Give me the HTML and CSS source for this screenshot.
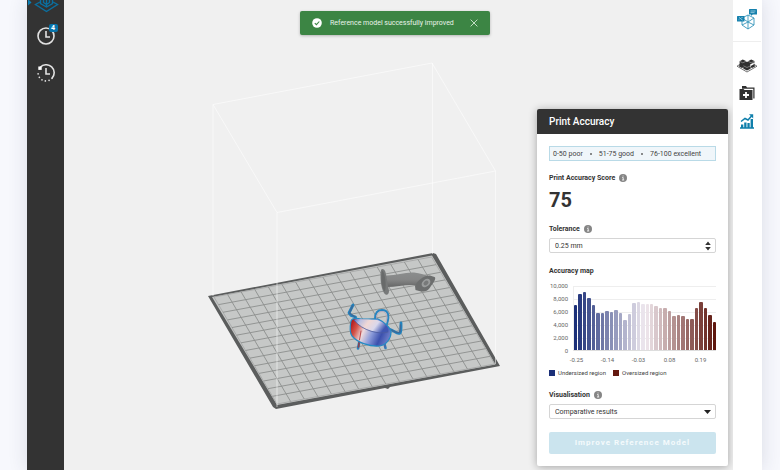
FILE: index.html
```html
<!DOCTYPE html>
<html lang="en">
<head>
<meta charset="utf-8">
<title>Print Accuracy</title>
<link rel="stylesheet" href="styles.css">
</head>
<body>
<div class="app">
  <nav class="sidebar" aria-label="Main">
    <button class="side-button side-button-current" aria-label="Prepare">
      <svg width="36" height="14" viewBox="0 0 36 14" fill="none" stroke="#0b6f9f" stroke-width="1.4">
        <path d="M0 -1 3.500 2.500 0 5.500Z" fill="#0b7fb5" stroke="none"/>
        <path d="M12 2 7.500 4.500 18.500 11.500 29.500 4.500 25 2"/>
        <path d="M12.500 0v3.500l6 3.500 6-3.500V0M18.500 0v7M15.500 -1v3.500l3 2 3-2V-1"/>
      </svg>
    </button>
    <button class="side-button" aria-label="Queue, 4 jobs">
      <svg width="18" height="18" viewBox="0 0 18 18" fill="none" stroke="#e2e2e2" stroke-width="1.600">
        <circle cx="9" cy="9" r="8"/><path d="M9 4v6h4"/>
      </svg>
      <span class="count">4</span>
    </button>
    <button class="side-button" aria-label="History">
      <svg width="18" height="18" viewBox="0 0 18 18" fill="none" stroke="#e2e2e2" stroke-width="1.600">
        <path d="M3.300 3.300A8 8 0 0 1 15 14.300"/>
        <path d="M15 14.300A8 8 0 0 1 1.200 7.500" stroke-width="1.700" stroke-linecap="round" stroke-dasharray="0 3.600"/>
        <path d="M9 4v6h4"/><path d="M1.300 2.500h3.400v3.400H1.300Z" fill="#fff" stroke="none"/>
      </svg>
    </button>
  </nav>

  <main class="viewport">
    <svg class="scene" viewBox="64 0 669 470" preserveAspectRatio="xMinYMin slice" role="img" aria-label="Build plate with two models">
      <defs>
        <linearGradient id="bowl" x1="0" y1=".3" x2="1" y2=".6">
          <stop offset="0" stop-color="#b51f22"/><stop offset=".15" stop-color="#d4554a"/><stop offset=".34" stop-color="#eddadd"/>
          <stop offset=".55" stop-color="#8c9cda"/><stop offset=".78" stop-color="#3b50ad"/><stop offset="1" stop-color="#7181cb"/>
        </linearGradient>
        <linearGradient id="bowl-inside" x1="0" y1="0" x2="1" y2=".3">
          <stop offset="0" stop-color="#5366b8"/><stop offset=".2" stop-color="#b9bfe2"/><stop offset=".45" stop-color="#f0d8d5"/>
          <stop offset=".72" stop-color="#d9d8ec"/><stop offset="1" stop-color="#4057b3"/>
        </linearGradient>
        <linearGradient id="pipe" x1="0" y1="0" x2="0" y2="1">
          <stop offset="0" stop-color="#8b8d8d"/><stop offset=".5" stop-color="#858686"/><stop offset="1" stop-color="#666767"/>
        </linearGradient>
      </defs>
      <path d="M208 296 433 253 436 254 500 366 390 387 388 389 385 388 276 409 273 407Z" fill="#5b5d5d"/>
      <path d="M212 297 432 255.500 495.500 364.500 277 405Z" fill="#c6c8c7"/>
      <path d="M214 297 431.600 257 494.600 364 277 404Z" fill="none" stroke="#a3a5a4" stroke-width=".8"/>
      <g transform="matrix(13.6 -2.5 4.5 7.64 214 297)" fill="none" stroke="#8c8e8d">
        <path vector-effect="non-scaling-stroke" stroke-width=".9" d="M1 0v14M2 0v14M3 0v14M4 0v14M5 0v14M6 0v14M7 0v14M8 0v14M9 0v14M10 0v14M11 0v14M12 0v14M13 0v14M14 0v14M15 0v14M0 1h16M0 2h16M0 3h16M0 4h16M0 5h16M0 6h16M0 7h16M0 8h16M0 9h16M0 10h16M0 11h16M0 12h16M0 13h16"/>
      </g>
      <g fill="none" stroke="#fff" stroke-width="1" opacity=".55">
        <path d="M213 104.500 432 63 495.500 171 277 212.500ZM213 104.500V296M432.500 63V254M495.500 171V364M277 212.500V407"/>
      </g>
      <g>
        <path d="M385 275.500C395 276 405 272 414 272.500 420 273 426 275 430 277L420 286C410 283 398 287 387 287Z" fill="url(#pipe)"/>
        <path d="M381 270C382 268 384.500 269 385.500 272L389 291C389 295 386 296 384 293 380.500 287 380 276 381 270Z" fill="#777979"/>
        <path d="M382 271C383 270 385 275 385.500 282S385 292 384 291C381 285 381 276 382 271Z" fill="#686a6a"/>
        <path d="M415 286C417 281 424 275 430 275.500L434.500 277C436.500 278 434 282 431 286 428 291 425 292 421 291.500L415.500 290Z" fill="#6c6e6e"/>
        <ellipse cx="426" cy="283" rx="5" ry="3.500" transform="rotate(-42 426 283)" fill="#9a9c9c"/>
        <ellipse cx="426" cy="283" rx="2.800" ry="2" transform="rotate(-42 426 283)" fill="#777979"/>
      </g>
      <g stroke-linecap="round" stroke-linejoin="round" fill="none">
        <path d="M359.500 341 358 348.500M384 342 385.500 348" stroke="#2e83bd" stroke-width="2.600"/>
        <path d="M359.500 340 358.500 347" stroke="#8c4350" stroke-width="1.700"/>
        <path d="M384 342 385 347" stroke="#5265a5" stroke-width="1.500"/>
        <path d="M375 319C375 313 378 310 382 310 388 310 390 315 387 324" stroke="#2684c0" stroke-width="1.900"/>
        <path d="M376.500 319C376.500 314 379 311.500 382 311.500 386 311.500 388 316 386 322" stroke="#b4a3ba" stroke-width=".8"/>
        <path d="M353 305 349 313 351 315.500 355.500 317 355.500 321M389 329C394 330 397 335 400 333 401.500 331 401 327 401 323" stroke="#2282bd" stroke-width="2.800"/>
        <path d="M352.500 306 349.500 313 355 317M390 330C395 331 397 334 400 332L400.500 325" stroke="#3c6998" stroke-width="1.500"/>
        <path d="M351 321C352 318 356 318 361 319L378 319C385 322 391 329 391 332 391 339 386 345 380 346 369 347 357 342 352 336 350 333 350 326 351 321Z" fill="url(#bowl)" stroke="#238ac5" stroke-width="1.200"/>
        <path d="M354 320C357 317.500 366 320 377 320 385 322 390 329 388 332 381 334 362 331 354 320Z" fill="url(#bowl-inside)"/>
        <path d="M354 320C362 331 380 335 388 332" stroke="#4d5d9e" stroke-width=".8"/>
        <path d="M361 331 359.500 340" stroke="#ba4b4c" stroke-width="1"/>
      </g>
    </svg>

    <div class="toast" role="status">
      <svg width="10" height="10" viewBox="0 0 10 10"><circle cx="5" cy="5" r="4.800" fill="#fff"/><path d="m2.800 5.200 1.600 1.500 2.900-3.200" fill="none" stroke="#3c8544" stroke-width="1.100"/></svg>
      <span class="toast-text">Reference model successfully improved</span>
      <button class="toast-close" aria-label="Dismiss">
        <svg width="8" height="8" viewBox="0 0 8 8"><path d="m.6.6 6.800 6.800M7.400.6.6 7.400" stroke="#c3dec4" fill="none"/></svg>
      </button>
    </div>

    <section class="panel">
      <h1 class="panel-title">Print Accuracy</h1>
      <div class="panel-body">
        <div class="scale"><span>0-50 poor</span><i class="dot"></i><span>51-75 good</span><i class="dot"></i><span>76-100 excellent</span></div>
        <h2 class="label">Print Accuracy Score
          <svg class="info" viewBox="0 0 8 8"><circle cx="4" cy="4" r="4" fill="#858585"/><path d="M3.200 3.500H4.200V6M3 6h2.200M3.600 2h.9" stroke="#fff" stroke-width=".8" fill="none"/></svg></h2>
        <output class="score">75</output>
        <div class="field">
          <label class="label" for="tolerance">Tolerance
            <svg class="info" viewBox="0 0 8 8"><circle cx="4" cy="4" r="4" fill="#858585"/><path d="M3.200 3.500H4.200V6M3 6h2.200M3.600 2h.9" stroke="#fff" stroke-width=".8" fill="none"/></svg></label>
          <div class="control">
            <input id="tolerance" type="text" value="0.25 mm">
            <svg class="control-icon" width="6" height="10" viewBox="0 0 6 10"><path d="M3 .5 5.800 4H.2ZM3 9.500.2 6h5.600Z" fill="#333"/></svg>
          </div>
        </div>
        <h2 class="label">Accuracy map</h2>
        <figure class="chart">
          <div class="y-axis"><span>10,000</span><span>8,000</span><span>6,000</span><span>4,000</span><span>2,000</span><span>0</span></div>
          <div class="plot" id="plot"></div>
          <div class="x-axis"><span>-0.25</span><span>-0.14</span><span>-0.03</span><span>0.08</span><span>0.19</span></div>
          <figcaption class="legend"><i class="swatch swatch-under"></i><span>Undersized region</span><i class="swatch swatch-over"></i><span>Oversized region</span></figcaption>
        </figure>
        <div class="field">
          <label class="label" for="visualisation">Visualisation
            <svg class="info" viewBox="0 0 8 8"><circle cx="4" cy="4" r="4" fill="#858585"/><path d="M3.200 3.500H4.200V6M3 6h2.200M3.600 2h.9" stroke="#fff" stroke-width=".8" fill="none"/></svg></label>
          <div class="control">
            <select id="visualisation"><option>Comparative results</option></select>
            <svg class="control-icon" width="7" height="4" viewBox="0 0 7 4"><path d="M0 0h7L3.500 4Z" fill="#222"/></svg>
          </div>
        </div>
        <button class="improve" disabled>Improve Reference Model</button>
      </div>
    </section>
  </main>

  <aside class="toolbar" aria-label="Tools">
    <button class="tool tool-first" aria-label="Model details">
      <svg width="22" height="22" viewBox="0 0 22 22" fill="none" stroke="#3796bb" stroke-width=".9">
        <path d="m12 6 6 3v7l-6 4L6 16V9ZM6 9l6 4 6-4M12 13v7M12 6v7M6 16l6-3 6 3"/>
        <rect x="13" y="0" width="8" height="5.500" rx=".6" fill="#1681ad" stroke="none"/><path d="M15 7V5h2Z" fill="#1681ad" stroke="none"/><path d="M14.500 2h5M14.500 3.600h4" stroke="#b9dceb" stroke-width=".7"/>
        <rect x="1" y="7" width="7.500" height="5.500" rx=".5" fill="#1681ad" stroke="none"/><path d="m3 8.500 3.500 2.500M3 10.500v.7M5.500 8.500h1" stroke="#d8edf5" stroke-width=".7"/>
      </svg>
    </button>
    <button class="tool" aria-label="Arrange models">
      <svg width="22" height="14" viewBox="0 0 22 14">
        <path d="M4.500 5 1 7.200 11 13l10-5.800L17.500 5" fill="#fff" stroke="#666" stroke-width=".9"/>
        <path d="m11 2.500 3.200 1.500v3L11 8.600 7.800 7V4ZM6.800.6l3.200 1.500v3L6.800 6.700 3.600 5.200v-3ZM15.200.6l3.200 1.500v3l-3.200 1.600L12 5.200v-3ZM11 5l3.600 1.700v3L11 11.500 7.400 9.700v-3ZM4 3.500l4 2v2.500L6 9 3 7.500ZM18 3.500l-4 2v2.500L16 9l3-1.500Z" fill="#303030"/>
        <path d="m3.600 2.300 3.200 1.500L10 2.300M12 2.300l3.200 1.500 3.200-1.500M7.400 6.800 11 8.500l3.600-1.700" fill="none" stroke="#aaa" stroke-width=".6"/>
      </svg>
    </button>
    <button class="tool" aria-label="Add from library">
      <svg width="16" height="15" viewBox="0 0 16 15"><path d="M3 0h4l1 1.500h7.500V12.500h-1.200V2.700H3Z" fill="#303030"/><path d="M.5 3h4l1 1h8v10H.5Z" fill="#303030"/><path d="M7 6v6M4 9h6" stroke="#fff" stroke-width="1.800"/></svg>
    </button>
    <button class="tool" aria-label="Print accuracy">
      <svg width="14" height="15" viewBox="0 0 14 15" fill="#0f7fab"><path d="M1 10.500h2.300v3H1ZM4.200 8.500h2.300v5H4.200ZM7.400 9h2.300v4.500H7.400ZM10.600 5h2.400v8.500h-2.400ZM0 13.300h14v1.400H0Z"/><path d="m1 7.500 4-3 3 1.500 4-4.500" fill="none" stroke="#0f7fab" stroke-width="1.500"/><path d="M9 .2H13.200V4.400Z"/></svg>
    </button>
  </aside>
</div>
<script src="script.js"></script>
</body>
</html>
```
FILE: styles.css
```css
* { box-sizing: border-box; }
body { margin: 0; background: #f7f8fd; color: #333; font: 7px/10px Roboto, sans-serif; }
button, input, select { font: inherit; color: inherit; }
button { border: 0; padding: 0; background: none; }
svg { display: block; }
h1, h2, figure { margin: 0; }

.app { display: flex; min-height: 100vh; margin: 0 18px 0 27px; box-shadow: 0 0 18px rgba(40, 50, 80, .14); }

.sidebar { display: flex; flex-direction: column; align-items: center; flex: 0 0 37px; background: #333; }
.side-button { position: relative; margin-bottom: 19px; }
.side-button-current { margin-bottom: 13px; }
.count { position: absolute; top: -3px; left: 12px; width: 9px; border-radius: 2px; background: #0874ab; color: #fff; font-weight: 700; line-height: 8px; text-align: center; }

.viewport { position: relative; flex: 1; min-width: 0; overflow: hidden; background: #f0f0f0; }
.scene { width: 100%; height: 100%; }

.toast { position: absolute; top: 11px; right: 243px; display: flex; align-items: center; gap: 8px; height: 24px; padding: 0 12px; border-radius: 2px; background: #3c8544; color: #e9f4e9; box-shadow: 0 1px 3px rgba(0, 0, 0, .25); white-space: nowrap; }
.toast-text { min-width: 132px; }

.panel { position: absolute; top: 109px; right: 5px; width: 191px; border-radius: 2px; background: #fff; box-shadow: 0 1px 9px rgba(0, 0, 0, .32); overflow: hidden; }
.panel-title { padding: 0 12px; background: #333; color: #fff; font-size: 10px; line-height: 25px; font-weight: 500; }
.panel-body { display: flex; flex-direction: column; padding: 12px; }
.scale { display: flex; align-items: center; gap: 7px; height: 15px; padding: 0 3px; border: 1px solid #b9dae7; background: #f0f6fa; color: #444; white-space: nowrap; }
.dot { width: 2px; height: 2px; border-radius: 50%; background: #666; }
.label { display: flex; align-items: center; gap: 4px; line-height: 10px; font-size: 7px; font-weight: 700; }
.info { width: 8px; height: 8px; }
.scale + .label { margin-top: 12px; }
.score { margin: 5px 0 11px; font-size: 20px; line-height: 25px; font-weight: 700; }
.control { position: relative; margin-top: 4px; }
.control input, .control select { display: block; width: 100%; height: 15px; padding: 0 5px; border: 1px solid #d5d5d5; border-radius: 2px; background: #fff; color: #333; appearance: none; outline: 0; }
.control-icon { position: absolute; top: 50%; right: 5px; transform: translateY(-50%); pointer-events: none; }
.field + .label { margin-top: 13px; }

.chart { display: grid; grid-template-columns: 19px 1fr; column-gap: 5px; margin: 10px 0 12px; color: #666; font-size: 6px; }
.y-axis { display: flex; flex-direction: column; justify-content: space-between; margin: -5px 0; text-align: right; }
.plot { display: flex; align-items: flex-end; justify-content: space-between; gap: 1px; height: 65px; border-bottom: 1px solid #ddd; background: repeating-linear-gradient(#eee 0 1px, transparent 1px 13px); border-left: 1px solid #eee; }
.bar { flex: 1; border-radius: 1px 1px 0 0; }
.x-axis { grid-column: 2; display: flex; margin: 4px -10px 0 -12px; }
.x-axis span { flex: 0 0 31px; text-align: center; }
.legend { grid-column: 1 / -1; display: flex; align-items: center; gap: 3px; margin-top: 3px; color: #444; white-space: nowrap; }
.swatch { width: 6px; height: 6px; }
.swatch-under { background: #1b2f78; }
.swatch-over { background: #64180f; margin-left: 4px; }

.improve { height: 22px; margin-top: 13px; border-radius: 2px; background: #cbe4ee; color: #f4fafc; font-size: 8px; font-weight: 700; letter-spacing: 1px; }

.toolbar { display: flex; flex-direction: column; align-items: center; gap: 13px; flex: 0 0 29px; padding-right: 1px; background: #fff; }
.tool-first { display: flex; justify-content: center; width: 100%; padding: 9px 0 10px; margin-bottom: 4px; border-bottom: 1px solid #eee; }
```
FILE: script.js
```js
const counts = [7100, 8700, 9000, 8200, 7100, 5800, 5850, 6050, 6000, 6200, 5750, 4700, 5600, 7350, 7550, 7150,
  7150, 7200, 6800, 6550, 6600, 6150, 5300, 5450, 5350, 4850, 4900, 6600, 7450, 6550, 5450, 4450];
const under = [27, 47, 120], middle = [241, 234, 240], over = [95, 23, 14];
const mix = (a, b, t) => a.map((v, i) => Math.round(v + (b[i] - v) * t));
const plot = document.getElementById("plot");

counts.forEach((count, i) => {
  const t = i / (counts.length - 1) * 2;
  const color = t < 1 ? mix(under, middle, t) : mix(middle, over, t - 1);
  const bar = document.createElement("span");
  bar.className = "bar";
  bar.style.height = count / 100 + "%";
  bar.style.background = `rgb(${color})`;
  plot.append(bar);
});
```
